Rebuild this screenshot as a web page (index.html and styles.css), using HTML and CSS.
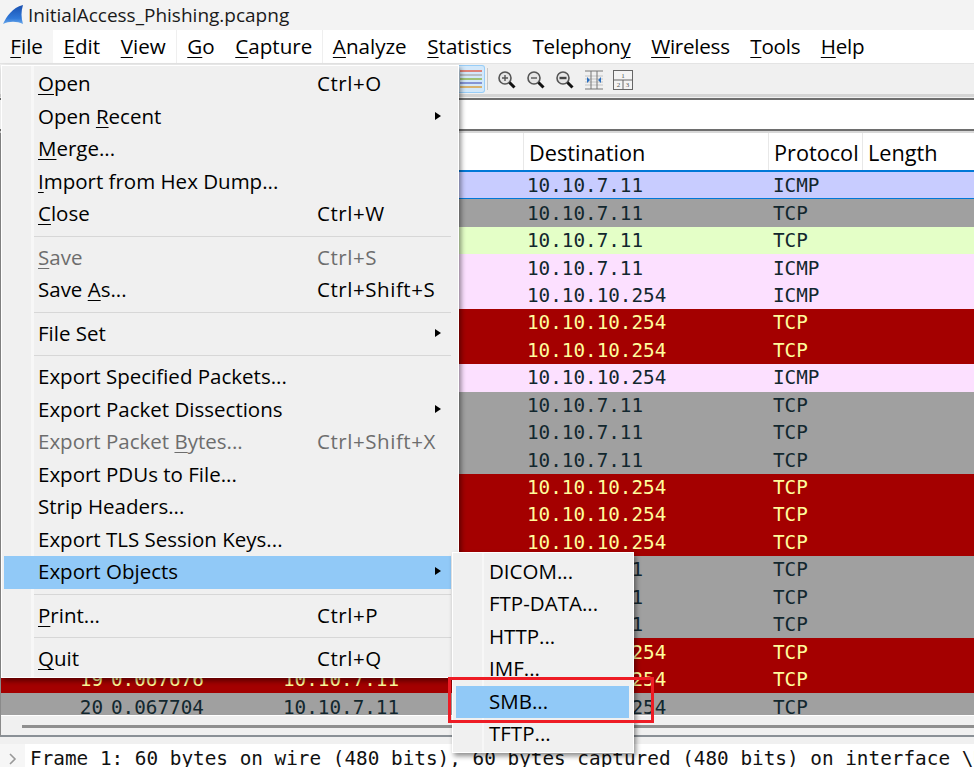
FILE: index.html
```html
<!DOCTYPE html>
<html lang="en">
<head>
<meta charset="utf-8">
<title>InitialAccess_Phishing.pcapng</title>
<link rel="stylesheet" href="styles.css">
</head>
<body>
<div class="window">
  <header class="titlebar">
    <svg class="fin" width="22" height="22" viewBox="0 0 22 22"><defs><linearGradient id="fing" x1="0" y1="0" x2="0" y2="1"><stop offset="0" stop-color="#1a50b0"/><stop offset=".7" stop-color="#2f78d8"/><stop offset="1" stop-color="#6aa8ea"/></linearGradient></defs><path d="M1 20C5 12 10 4 21 1c-2 6-2 13 0 19C15 17 7 17 1 20z" fill="url(#fing)"/></svg>
    <span>InitialAccess_Phishing.pcapng</span>
  </header>
  <nav class="menubar">
    <span class="mb mb-active"><u>F</u>ile</span>
    <span class="mb"><u>E</u>dit</span>
    <span class="mb"><u>V</u>iew</span>
    <span class="mb mb-div"><u>G</u>o</span>
    <span class="mb"><u>C</u>apture</span>
    <span class="mb mb-div mb-pull"><u>A</u>nalyze</span>
    <span class="mb"><u>S</u>tatistics</span>
    <span class="mb mb-tight">Telephon<u>y</u></span>
    <span class="mb mb-tight"><u>W</u>ireless</span>
    <span class="mb mb-tight"><u>T</u>ools</span>
    <span class="mb mb-tight"><u>H</u>elp</span>
  </nav>
  <div class="toolbar">
    <span class="tool tool-on">
      <svg width="24" height="24" viewBox="0 0 24 24"><g stroke-width="1.5"><path d="M0 4h22" stroke="#e0604c"/><path d="M0 8h22" stroke="#b0b0b0"/><path d="M0 12h22" stroke="#8cb44a"/><path d="M0 16h22" stroke="#6a78c8"/><path d="M0 20h22" stroke="#d8a040"/></g></svg>
    </span>
    <i class="tool-sep"></i>
    <span class="tool"><svg width="20" height="20" viewBox="0 0 20 20"><circle cx="8" cy="8" r="6" fill="#e6e6e6" stroke="#555" stroke-width="1.6"/><path d="M5 8h6M8 5v6" stroke="#555" stroke-width="1.4"/><path d="M12.5 12.5l5 5" stroke="#111" stroke-width="3"/></svg></span>
    <span class="tool"><svg width="20" height="20" viewBox="0 0 20 20"><circle cx="8" cy="8" r="6" fill="#e6e6e6" stroke="#555" stroke-width="1.6"/><path d="M5 8h6" stroke="#555" stroke-width="1.4"/><path d="M12.5 12.5l5 5" stroke="#111" stroke-width="3"/></svg></span>
    <span class="tool"><svg width="20" height="20" viewBox="0 0 20 20"><circle cx="8" cy="8" r="6" fill="#e6e6e6" stroke="#555" stroke-width="1.6"/><path d="M4.5 8h7" stroke="#444" stroke-width="2.4"/><path d="M12.5 12.5l5 5" stroke="#111" stroke-width="3"/></svg></span>
    <span class="tool"><svg width="20" height="20" viewBox="0 0 20 20"><path d="M1 6h18M1 9h18M1 12h18M1 15h18" stroke="#c4c4c4"/><path d="M1 1h18M1 19h18" stroke="#777"/><path d="M7 1v18M13 1v18" stroke="#777"/><path d="M3 7l3 3-3 3zM17 7l-3 3 3 3z" fill="#2a6fc0"/></svg></span>
    <span class="tool"><svg width="20" height="20" viewBox="0 0 20 20"><rect x=".5" y=".5" width="19" height="19" fill="#f4f4f4" stroke="#666"/><path d="M1 10h18M10 10v9" stroke="#666"/><text x="10" y="8" class="pane-num">1</text><text x="5.5" y="17" class="pane-num">2</text><text x="14.5" y="17" class="pane-num">3</text></svg></span>
  </div>
  <div class="filter"></div>
  <div class="packets">
    <div class="thead">
      <div class="th th-no">No.</div>
      <div class="th th-time">Time</div>
      <div class="th th-src">Source</div>
      <div class="th th-dst">Destination</div>
      <div class="th th-proto">Protocol</div>
      <div class="th th-len">Length</div>
    </div>
    <div class="rows">
      <div class="row r-icmp r-selected"><span class="c-no">1</span><span class="c-time">0.000000</span><span class="c-src">10.10.10.254</span><span class="c-dst">10.10.7.11</span><span>ICMP</span></div>
      <div class="row r-grey"><span class="c-no">2</span><span class="c-time">0.000120</span><span class="c-src">10.10.10.254</span><span class="c-dst">10.10.7.11</span><span>TCP</span></div>
      <div class="row r-green"><span class="c-no">3</span><span class="c-time">0.000350</span><span class="c-src">10.10.10.254</span><span class="c-dst">10.10.7.11</span><span>TCP</span></div>
      <div class="row r-pink"><span class="c-no">4</span><span class="c-time">0.000610</span><span class="c-src">10.10.10.254</span><span class="c-dst">10.10.7.11</span><span>ICMP</span></div>
      <div class="row r-pink"><span class="c-no">5</span><span class="c-time">0.000840</span><span class="c-src">10.10.7.11</span><span class="c-dst">10.10.10.254</span><span>ICMP</span></div>
      <div class="row r-red"><span class="c-no">6</span><span class="c-time">0.001020</span><span class="c-src">10.10.7.11</span><span class="c-dst">10.10.10.254</span><span>TCP</span></div>
      <div class="row r-red"><span class="c-no">7</span><span class="c-time">0.001280</span><span class="c-src">10.10.7.11</span><span class="c-dst">10.10.10.254</span><span>TCP</span></div>
      <div class="row r-pink"><span class="c-no">8</span><span class="c-time">0.001530</span><span class="c-src">10.10.7.11</span><span class="c-dst">10.10.10.254</span><span>ICMP</span></div>
      <div class="row r-grey"><span class="c-no">9</span><span class="c-time">0.001790</span><span class="c-src">10.10.10.254</span><span class="c-dst">10.10.7.11</span><span>TCP</span></div>
      <div class="row r-grey"><span class="c-no">10</span><span class="c-time">0.002040</span><span class="c-src">10.10.10.254</span><span class="c-dst">10.10.7.11</span><span>TCP</span></div>
      <div class="row r-grey"><span class="c-no">11</span><span class="c-time">0.002310</span><span class="c-src">10.10.10.254</span><span class="c-dst">10.10.7.11</span><span>TCP</span></div>
      <div class="row r-red"><span class="c-no">12</span><span class="c-time">0.002580</span><span class="c-src">10.10.7.11</span><span class="c-dst">10.10.10.254</span><span>TCP</span></div>
      <div class="row r-red"><span class="c-no">13</span><span class="c-time">0.002860</span><span class="c-src">10.10.7.11</span><span class="c-dst">10.10.10.254</span><span>TCP</span></div>
      <div class="row r-red"><span class="c-no">14</span><span class="c-time">0.003120</span><span class="c-src">10.10.7.11</span><span class="c-dst">10.10.10.254</span><span>TCP</span></div>
      <div class="row r-grey"><span class="c-no">15</span><span class="c-time">0.003390</span><span class="c-src">10.10.10.254</span><span class="c-dst">10.10.7.11</span><span>TCP</span></div>
      <div class="row r-grey"><span class="c-no">16</span><span class="c-time">0.003650</span><span class="c-src">10.10.10.254</span><span class="c-dst">10.10.7.11</span><span>TCP</span></div>
      <div class="row r-grey"><span class="c-no">17</span><span class="c-time">0.003920</span><span class="c-src">10.10.10.254</span><span class="c-dst">10.10.7.11</span><span>TCP</span></div>
      <div class="row r-red"><span class="c-no">18</span><span class="c-time">0.067412</span><span class="c-src">10.10.7.11</span><span class="c-dst">10.10.10.254</span><span>TCP</span></div>
      <div class="row r-red"><span class="c-no">19</span><span class="c-time">0.067676</span><span class="c-src">10.10.7.11</span><span class="c-dst">10.10.10.254</span><span>TCP</span></div>
      <div class="row r-grey"><span class="c-no">20</span><span class="c-time">0.067704</span><span class="c-src">10.10.7.11</span><span class="c-dst">10.10.10.254</span><span>TCP</span></div>
    </div>
    <div class="hscroll"><div class="hthumb"></div></div>
  </div>
  <div class="details">
    <span class="chev"><svg width="10" height="12" viewBox="0 0 10 12"><path d="M2 1l5 5-5 5" fill="none" stroke="#999" stroke-width="1.6"/></svg></span>
    <span class="detail-text">Frame 1: 60 bytes on wire (480 bits), 60 bytes captured (480 bits) on interface \Device\NPF_{0}</span>
  </div>

  <div class="menu file-menu">
    <div class="mi"><span class="ml"><u>O</u>pen</span><span class="ms">Ctrl+O</span></div>
    <div class="mi"><span class="ml">Open <u>R</u>ecent</span><i class="arrow"></i></div>
    <div class="mi"><span class="ml"><u>M</u>erge...</span></div>
    <div class="mi"><span class="ml"><u>I</u>mport from Hex Dump...</span></div>
    <div class="mi"><span class="ml"><u>C</u>lose</span><span class="ms">Ctrl+W</span></div>
    <div class="msep"></div>
    <div class="mi mi-off"><span class="ml"><u>S</u>ave</span><span class="ms">Ctrl+S</span></div>
    <div class="mi"><span class="ml">Save <u>A</u>s...</span><span class="ms">Ctrl+Shift+S</span></div>
    <div class="msep"></div>
    <div class="mi"><span class="ml">File Set</span><i class="arrow"></i></div>
    <div class="msep"></div>
    <div class="mi"><span class="ml">Export Specified Packets...</span></div>
    <div class="mi"><span class="ml">Export Packet Dissections</span><i class="arrow"></i></div>
    <div class="mi mi-off"><span class="ml">Export Packet <u>B</u>ytes...</span><span class="ms">Ctrl+Shift+X</span></div>
    <div class="mi"><span class="ml">Export PDUs to File...</span></div>
    <div class="mi"><span class="ml">Strip Headers...</span></div>
    <div class="mi"><span class="ml">Export TLS Session Keys...</span></div>
    <div class="mi mi-hot"><span class="ml">Export Objects</span><i class="arrow"></i></div>
    <div class="msep"></div>
    <div class="mi"><span class="ml"><u>P</u>rint...</span><span class="ms">Ctrl+P</span></div>
    <div class="msep"></div>
    <div class="mi"><span class="ml"><u>Q</u>uit</span><span class="ms">Ctrl+Q</span></div>
  </div>

  <div class="menu sub-menu">
    <div class="si">DICOM...</div>
    <div class="si">FTP-DATA...</div>
    <div class="si">HTTP...</div>
    <div class="si">IMF...</div>
    <div class="si si-hot">SMB...</div>
    <div class="si">TFTP...</div>
  </div>
  <div class="callout"></div>
</div>
</body>
</html>
```
FILE: styles.css
```css
* { box-sizing: border-box; }
html, body { margin: 0; padding: 0; }
body { width: 974px; height: 767px; overflow: hidden; background: #f0f0f0; font-family: "Open Sans", "Noto Sans", sans-serif; font-size: 20.5px; color: #000; }
u { text-underline-offset: 3px; text-decoration-thickness: 1px; }

.window { position: relative; width: 974px; height: 767px; overflow: hidden; display: flex; flex-direction: column; }

.titlebar { height: 30px; flex: none; display: flex; align-items: center; gap: 4px; padding-left: 2px; background: #f3f3f3; color: #1a1a1a; font-size: 19px; }
.fin { flex: none; }

.menubar { height: 34px; flex: none; display: flex; align-items: center; background: #fff; border-bottom: 1px solid #e4e4e4; }
.mb { height: 33px; line-height: 32px; padding: 0 10.3px; white-space: nowrap; font-size: 20.6px; }
.mb-active { background: #f5f5f5; }
.mb-div { border-left: 1px solid #efefef; }
.mb-pull { margin-left: -1px; }
.mb-tight { letter-spacing: -.25px; }

.toolbar { height: 33px; flex: none; display: flex; align-items: center; justify-content: flex-start; padding-left: 459px; background: #f0f0f0; border-bottom: 3px solid #d4d4d4; }
.tool { width: 29px; height: 28px; display: flex; align-items: center; justify-content: center; flex: none; padding-top: 2px; }
.tool-on { width: 26px; padding-top: 0; background: #d3e8fa; border: 1px solid #98cdf7; border-left: none; border-radius: 0 3px 3px 0; }
.tool-sep { width: 1px; height: 22px; margin: 0 4px 0 2px; background: #c8c8c8; flex: none; }
.pane-num { font-family: "Liberation Serif", serif; font-size: 7px; fill: #555; text-anchor: middle; }

.filter { height: 33px; flex: none; margin-top: 1px; background: #fff; border-top: 2px solid #6e6e6e; border-bottom: 2px solid #6e6e6e; box-shadow: 0 2px 0 #d8d8d8; }

.packets { flex: none; height: 604px; margin-top: 2px; border-left: 1px solid #8a8a8a; border-bottom: 2px solid #8a9096; background: #f0f0f0; display: flex; flex-direction: column; overflow: hidden; }
.thead { height: 37px; flex: none; display: grid; grid-template-columns: 103px 180px 240px 245px 94px 1fr; background: #fff; }
.th { display: flex; align-items: center; padding: 2px 0 0 5px; border-right: 1px solid #e8e8e8; font-size: 21.7px; }
.th-len { border-right: none; }

.rows { height: 545px; flex: none; overflow: hidden; border-top: 2px solid #0078d7; font-family: "DejaVu Sans Mono", "Liberation Mono", monospace; font-size: 19.3px; }
.row { height: 27.45px; display: grid; grid-template-columns: 102px 180px 244px 246px 1fr; align-items: center; color: #12272e; white-space: nowrap; overflow: hidden; }
.c-no { text-align: right; }
.c-time { padding-left: 8px; }
.r-icmp { background: #c8ccff; }
.r-selected { border-bottom: 1px solid #0078d7; }
.r-grey { background: #a0a0a0; }
.r-green { background: #e4ffc7; }
.r-pink { background: #fce0ff; }
.r-red { background: #a40000; color: #fffc9c; }

.hscroll { flex: 1; padding: 9px 0 0 21px; background: #f0f0f0; border-top: 1px solid #fff; }
.hthumb { height: 3px; background: #8f8f8f; }

.details { height: 23px; flex: none; margin-top: 7px; display: flex; align-items: center; background: #fff; overflow: hidden; white-space: nowrap; }
.chev { width: 25px; flex: none; height: 100%; padding-top: 6px; display: flex; align-items: center; justify-content: center; background: #f6f6f6; }
.detail-text { padding: 5px 0 0 5px; font-family: "DejaVu Sans Mono", "Liberation Mono", monospace; font-size: 19.35px; color: #111; }

.menu { position: absolute; background: #f0f0f0; border: 1px solid #fff; box-shadow: 2px 3px 5px rgba(0,0,0,.45); }
.file-menu { left: 1px; top: 65px; width: 458px; height: 613px; padding: 2px 3px 0; background: linear-gradient(to right, #f0f0f0 29px, #f7f7f7 29px, #f7f7f7 32px, #f0f0f0 32px); }
.mi { height: 32.5px; display: flex; align-items: center; padding: 0 0 2px 33px; white-space: nowrap; margin-right: 4px; }
.ml { width: 279px; flex: none; }
.ms { flex: none; letter-spacing: .55px; }
.mi-off { color: #6d6d6d; }
.mi-hot { background: #91c9f7; margin-left: -1px; padding-left: 34px; }
.msep { height: 1px; margin: 5px 4px 5px 29px; background: #d7d7d7; }
.arrow { margin-left: 118px; width: 0; height: 0; border-left: 6px solid #000; border-top: 4px solid transparent; border-bottom: 4px solid transparent; }

.sub-menu { left: 452px; top: 552px; width: 182px; height: 201px; padding: 3px; background: linear-gradient(to right, #f0f0f0 29px, #f7f7f7 29px, #f7f7f7 31px, #f0f0f0 31px); }
.si { height: 32.4px; line-height: 30.4px; padding: 0 0 2px 33px; margin-right: 1px; white-space: nowrap; }
.si-hot { background: #91c9f7; }

.callout { position: absolute; left: 448px; top: 677px; width: 206px; height: 46px; border: 3px solid #ee1c25; }
```
